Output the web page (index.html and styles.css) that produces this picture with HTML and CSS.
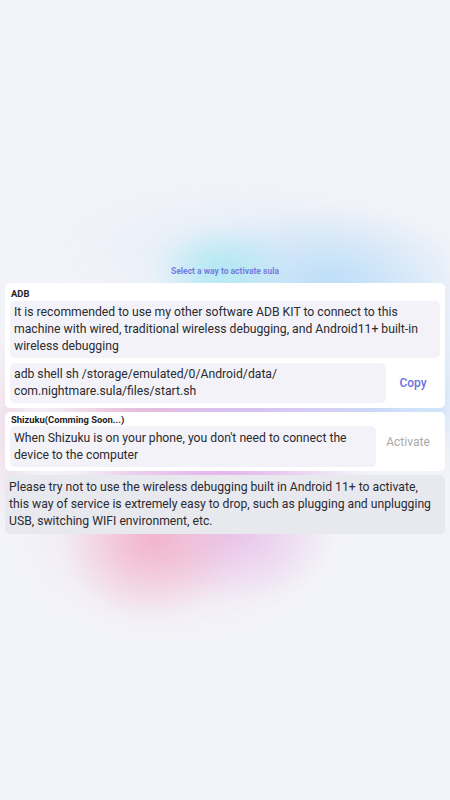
FILE: index.html
```html
<!DOCTYPE html>
<html>
<head>
<meta charset="utf-8">
<link rel="stylesheet" href="styles.css">
</head>
<body>
<div class="glow" aria-hidden="true"></div>
<main class="page">
  <div class="title">Select a way to activate sula</div>
  <section class="card card-adb">
    <div class="label">ADB</div>
    <div class="box">It is recommended to use my other software ADB KIT to connect to this machine with wired, traditional wireless debugging, and Android11+ built-in wireless debugging</div>
    <div class="row">
      <div class="box box-cmd">adb shell sh /storage/emulated/0/Android/data/<br>com.nightmare.sula/files/start.sh</div>
      <div class="action action-copy">Copy</div>
    </div>
  </section>
  <section class="card card-shizuku">
    <div class="label">Shizuku(Comming Soon...)</div>
    <div class="row">
      <div class="box box-shizuku">When Shizuku is on your phone, you don't need to connect the device to the computer</div>
      <div class="action action-disabled">Activate</div>
    </div>
  </section>
  <div class="note">Please try not to use the wireless debugging built in Android 11+ to activate, this way of service is extremely easy to drop, such as plugging and unplugging USB, switching WIFI environment, etc.</div>
</main>
</body>
</html>
```
FILE: styles.css
```css
html, body {
  margin: 0;
  padding: 0;
}
body {
  background: #f3f4f9;
  font-family: Roboto, "Liberation Sans", sans-serif;
  color: #2b2b30;
  width: 450px;
  height: 800px;
  overflow: hidden;
  position: relative;
}
.glow {
  position: absolute;
  left: 0;
  top: 0;
  width: 450px;
  height: 800px;
  background:
    radial-gradient(ellipse 70px 45px at 220px 270px, rgba(170, 232, 242, 0.95), rgba(170, 232, 242, 0) 100%),
    radial-gradient(ellipse 150px 80px at 330px 285px, rgba(180, 218, 248, 0.9), rgba(180, 218, 248, 0) 100%),
    radial-gradient(ellipse 180px 70px at 230px 250px, rgba(222, 234, 248, 0.7), rgba(222, 234, 248, 0) 100%),
    radial-gradient(ellipse 170px 45px at 250px 410px, rgba(205, 180, 240, 0.9), rgba(205, 180, 240, 0) 100%),
    radial-gradient(ellipse 120px 40px at 150px 410px, rgba(238, 170, 200, 0.85), rgba(238, 170, 200, 0) 100%),
    radial-gradient(ellipse 120px 40px at 380px 405px, rgba(180, 215, 248, 0.8), rgba(180, 215, 248, 0) 100%),
    radial-gradient(ellipse 150px 50px at 220px 475px, rgba(225, 170, 235, 0.9), rgba(225, 170, 235, 0) 100%),
    radial-gradient(ellipse 90px 80px at 150px 540px, rgba(242, 170, 195, 0.85), rgba(242, 170, 195, 0) 100%),
    radial-gradient(ellipse 100px 75px at 235px 530px, rgba(228, 180, 232, 0.75), rgba(228, 180, 232, 0) 100%),
    radial-gradient(ellipse 160px 110px at 170px 530px, rgba(242, 220, 234, 0.7), rgba(242, 220, 234, 0) 100%),
    radial-gradient(ellipse 40px 100px at 0px 430px, rgba(240, 195, 212, 0.7), rgba(240, 195, 212, 0) 100%),
    radial-gradient(ellipse 40px 100px at 450px 380px, rgba(190, 222, 248, 0.7), rgba(190, 222, 248, 0) 100%);
  filter: blur(8px);
}
.page {
  position: relative;
  padding: 265px 5px 0;
  display: flex;
  flex-direction: column;
  gap: 4px;
}
.title {
  text-align: center;
  font-size: 8.5px;
  font-weight: 700;
  line-height: 13px;
  color: #767ce0;
  margin-bottom: 1px;
}
.card {
  background: #ffffff;
  border-radius: 5px;
  padding: 4px 5px 5px;
  display: flex;
  flex-direction: column;
}
.card-adb {
  gap: 5px;
}
.card-adb .label {
  margin-bottom: -4px;
}
.card-shizuku {
  padding-top: 1px;
  padding-bottom: 4px;
}
.label {
  font-size: 9.4px;
  font-weight: 700;
  line-height: 13px;
  color: #222226;
  padding-left: 1px;
}
.box {
  background: #f2f2f8;
  border-radius: 5px;
  padding: 3px 4px;
  font-size: 12.2px;
  line-height: 17px;
}
.row {
  display: flex;
  align-items: center;
}
.box-cmd {
  width: 368px;
}
.box-shizuku {
  width: 358px;
  padding-top: 4px;
  padding-bottom: 3px;
}
.action {
  flex: 1;
  text-align: center;
  font-size: 12px;
  font-weight: 500;
}
.action-copy {
  color: #6c70e0;
}
.action-disabled {
  color: #a9a9ad;
  font-weight: 400;
  padding-bottom: 9px;
}
.note {
  background: #e8e8ef;
  border-radius: 5px;
  padding: 4px 12px 4px 4px;
  font-size: 12.2px;
  line-height: 17px;
}
```
